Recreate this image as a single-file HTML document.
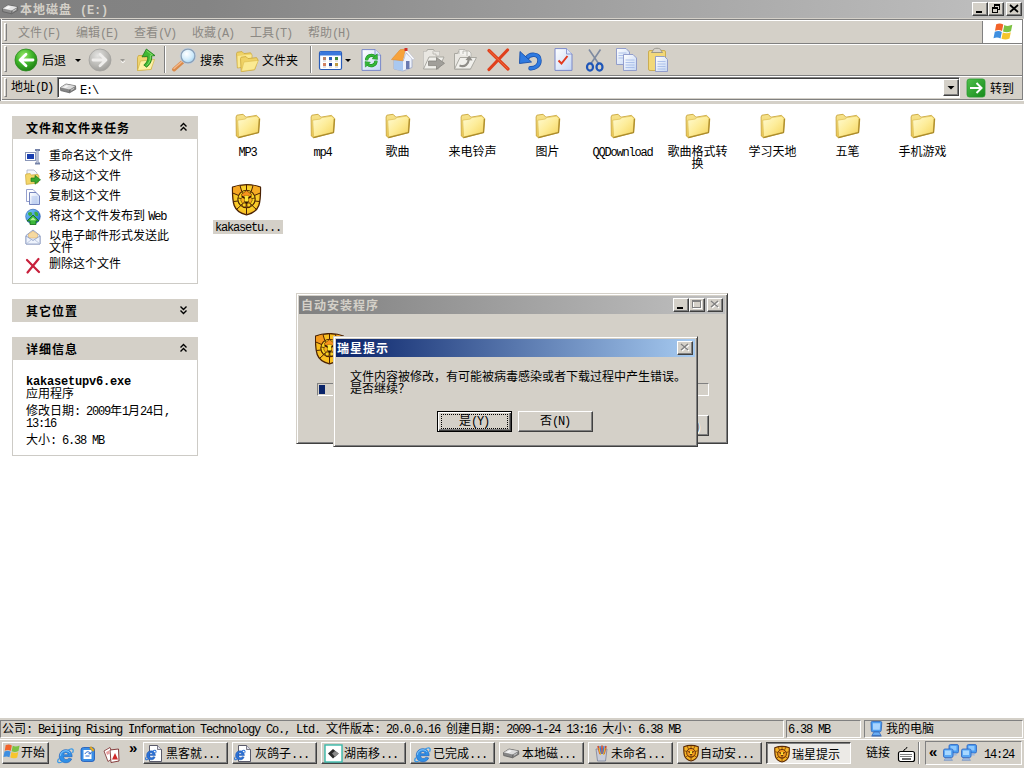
<!DOCTYPE html>
<html lang="zh-CN">
<head>
<meta charset="utf-8">
<title>本地磁盘 (E:)</title>
<style>
*{box-sizing:border-box;margin:0;padding:0}
html,body{width:1024px;height:768px;overflow:hidden;background:#fff}
body{font-family:"Liberation Sans","Noto Sans CJK SC",sans-serif;font-size:12px;color:#000;position:relative;line-height:12px}
.abs{position:absolute}
.t{position:absolute;white-space:nowrap;line-height:14px;height:14px;font-size:12px}
.l{font-family:"Liberation Mono",monospace;font-size:12px;letter-spacing:-1.2px}
.b{font-weight:bold;letter-spacing:1px}
.b .l{font-size:12px;letter-spacing:-0.2px}
.face{background:#d4d0c8}
.raised{background:#d4d0c8;border:1px solid;border-color:#fff #404040 #404040 #fff;box-shadow:inset -1px -1px 0 #808080}
.sunk{border:1px solid;border-color:#808080 #fff #fff #808080}
#title{left:0;top:0;width:1024px;height:18px;background:linear-gradient(90deg,#808080 0,#848484 20%,#a2a2a2 60%,#c0c0c0 100%)}
.cap{color:#d4d0c8}
.wb{position:absolute;width:16px;height:14px}
#menubar{left:0;top:18px;width:1024px;height:26px;background:#d4d0c8;border-top:1px solid #d4d0c8;border-bottom:1px solid #808080;box-shadow:inset 0 1px 0 #808080,inset 0 2px 0 #fff}
#menubar .t{color:#8c8984;top:7px}
.grip{position:absolute;width:3px;background:#d4d0c8;border:1px solid;border-color:#fff #808080 #808080 #fff}
#toolbar{left:0;top:44px;width:1024px;height:32px;background:#d4d0c8;border-top:1px solid #fff;border-bottom:1px solid #808080}
#addr{left:0;top:76px;width:1024px;height:24px;background:#d4d0c8;border-top:1px solid #fff;border-bottom:1px solid #808080}
.vsep{position:absolute;width:2px;border-left:1px solid #808080;border-right:1px solid #fff}
.hdr{position:absolute;left:12px;width:186px;height:23px;background:#d4d0c8}
.hdr .t{left:14px;top:6px}
.pbody{position:absolute;left:12px;width:186px;background:#fff;border:1px solid #cdcbc6;border-top:none}
.task{left:49px}
.fl{position:absolute;width:90px;text-align:center;line-height:12px;font-size:12px}
.tbn{position:absolute;top:742px;width:85px;height:22px}
.tbn .t{top:4px;left:22px}
.dlg{position:absolute;background:#d4d0c8;border:1px solid;border-color:#d4d0c8 #404040 #404040 #d4d0c8;box-shadow:inset 1px 1px 0 #fff,inset -1px -1px 0 #808080}
.btn{position:absolute;background:#d4d0c8;border:1px solid;border-color:#fff #404040 #404040 #fff;box-shadow:inset -1px -1px 0 #808080}
#ico{position:absolute;left:0;top:0;width:1024px;height:768px;pointer-events:none}
</style>
</head>
<body>

<!-- title bar -->
<div id="title" class="abs">
  <div class="t b cap" style="left:20px;top:3px">本地磁盘<span class="l" style="margin-left:8px">(E:)</span></div>
  <div class="wb raised" style="left:972px;top:2px"></div>
  <div class="wb raised" style="left:988px;top:2px"></div>
  <div class="wb raised" style="left:1006px;top:2px"></div>
</div>
<!-- menubar -->
<div id="menubar" class="abs">
  <div class="grip" style="left:4px;top:4px;height:18px"></div>
  <div class="t" style="left:18px">文件<span class="l">(F)</span></div>
  <div class="t" style="left:76px">编辑<span class="l">(E)</span></div>
  <div class="t" style="left:134px">查看<span class="l">(V)</span></div>
  <div class="t" style="left:192px">收藏<span class="l">(A)</span></div>
  <div class="t" style="left:250px">工具<span class="l">(T)</span></div>
  <div class="t" style="left:308px">帮助<span class="l">(H)</span></div>
  <div class="abs" style="left:982px;top:2px;width:41px;height:22px;background:#fff;border-left:1px solid #808080"></div>
</div>
<!-- toolbar -->
<div id="toolbar" class="abs">
  <div class="grip" style="left:4px;top:1px;height:26px"></div>
  <div class="t" style="left:42px;top:9px">后退</div>
  <div class="vsep" style="left:164px;top:1px;height:27px"></div>
  <div class="t" style="left:200px;top:9px">搜索</div>
  <div class="t" style="left:262px;top:9px">文件夹</div>
  <div class="vsep" style="left:310px;top:1px;height:27px"></div>
</div>
<!-- address -->
<div id="addr" class="abs">
  <div class="grip" style="left:4px;top:1px;height:19px"></div>
  <div class="t" style="left:11px;top:3px">地址<span class="l">(D)</span></div>
  <div class="abs" style="left:57px;top:0px;width:903px;height:21px;background:#fff;border:1px solid;border-color:#808080 #fff #fff #808080;box-shadow:inset 1px 1px 0 #404040"></div>
  <div class="abs raised" style="left:943px;top:2px;width:16px;height:17px"></div>
  <div class="t" style="left:80px;top:6px"><span class="l">E:\</span></div>
  <div class="t" style="left:990px;top:5px">转到</div>
</div>
<div class="abs" style="left:0;top:100px;width:1024px;height:4px;background:#d4d0c8;border-top:1px solid #fff"></div>
<div class="abs" style="left:0;top:19px;width:2px;height:82px;border-left:1px solid #808080;background:#fff"></div>
<div class="abs" style="left:1022px;top:19px;width:2px;height:81px;border-left:1px solid #808080;background:#fff"></div>

<!-- left panel -->
<div class="hdr" style="top:116px"><div class="t b">文件和文件夹任务</div></div>
<div class="pbody" style="top:139px;height:145px"></div>
<div class="t task" style="top:149px">重命名这个文件</div>
<div class="t task" style="top:169px">移动这个文件</div>
<div class="t task" style="top:189px">复制这个文件</div>
<div class="t task" style="top:209px">将这个文件发布到 <span class="l">Web</span></div>
<div class="t task" style="top:229px">以电子邮件形式发送此</div>
<div class="t task" style="top:241px">文件</div>
<div class="t task" style="top:257px">删除这个文件</div>

<div class="hdr" style="top:299px"><div class="t b">其它位置</div></div>
<div class="hdr" style="top:337px"><div class="t b">详细信息</div></div>
<div class="pbody" style="top:360px;height:96px"></div>
<div class="t b" style="left:26px;top:374px"><span class="l">kakasetupv6.exe</span></div>
<div class="t" style="left:26px;top:387px">应用程序</div>
<div class="t" style="left:26px;top:404px">修改日期<span class="l">: 2009</span>年<span class="l">1</span>月<span class="l">24</span>日<span class="l">,</span></div>
<div class="t" style="left:26px;top:416px"><span class="l">13:16</span></div>
<div class="t" style="left:26px;top:433px">大小<span class="l">: 6.38 MB</span></div>

<!-- files -->
<div class="fl" style="left:202.5px;top:146px"><span class="l">MP3</span></div>
<div class="fl" style="left:277.5px;top:146px"><span class="l">mp4</span></div>
<div class="fl" style="left:352.5px;top:146px">歌曲</div>
<div class="fl" style="left:427.5px;top:146px">来电铃声</div>
<div class="fl" style="left:502.5px;top:146px">图片</div>
<div class="fl" style="left:577.5px;top:146px"><span class="l">QQDownload</span></div>
<div class="fl" style="left:652.5px;top:146px">歌曲格式转<br>换</div>
<div class="fl" style="left:727.5px;top:146px">学习天地</div>
<div class="fl" style="left:802.5px;top:146px">五笔</div>
<div class="fl" style="left:877.5px;top:146px">手机游戏</div>
<div class="abs face" style="left:213px;top:220px;width:70px;height:14px"></div>
<div class="fl" style="left:203px;top:221px"><span class="l">kakasetu...</span></div>
<!-- status bar -->
<div class="abs face" style="left:0;top:718px;width:1024px;height:20px"></div>
<div class="abs sunk" style="left:0;top:720px;width:784px;height:18px"></div>
<div class="abs sunk" style="left:786px;top:720px;width:75px;height:18px"></div>
<div class="abs sunk" style="left:864px;top:720px;width:159px;height:18px"></div>
<div class="t" style="left:2px;top:722px">公司<span class="l">: Beijing Rising Information Technology Co., Ltd. </span>文件版本<span class="l">: 20.0.0.16 </span>创建日期<span class="l">: 2009-1-24 13:16 </span>大小<span class="l">: 6.38 MB</span></div>
<div class="t" style="left:788px;top:722px"><span class="l">6.38 MB</span></div>
<div class="t" style="left:886px;top:722px">我的电脑</div>

<!-- taskbar -->
<div class="abs face" style="left:0;top:738px;width:1024px;height:30px;box-shadow:inset 0 2px 0 #d4d0c8, inset 0 2px 0 #fff"></div><div class="abs" style="left:0;top:739px;width:1024px;height:1px;background:#fff"></div>
<div class="abs raised" style="left:2px;top:742px;width:47px;height:22px"></div>
<div class="t" style="left:21px;top:746px">开始</div>
<div class="t" style="left:129px;top:741px;font-weight:bold;font-size:15px">»</div>
<div class="tbn raised" style="left:143px"><div class="t">黑客就<span class="l">...</span></div></div>
<div class="tbn raised" style="left:232px"><div class="t">灰鸽子<span class="l">...</span></div></div>
<div class="tbn raised" style="left:321px"><div class="t">湖南移<span class="l">...</span></div></div>
<div class="tbn raised" style="left:410px"><div class="t">已完成<span class="l">...</span></div></div>
<div class="tbn raised" style="left:499px"><div class="t">本地磁<span class="l">...</span></div></div>
<div class="tbn raised" style="left:588px"><div class="t">未命名<span class="l">...</span></div></div>
<div class="tbn raised" style="left:677px"><div class="t">自动安<span class="l">...</span></div></div>
<div class="tbn" style="left:766px;background:#eceae6;border:1px solid;border-color:#404040 #fff #fff #404040;box-shadow:inset 1px 1px 0 #808080"><div class="t" style="left:25px;top:5px">瑞星提示</div></div>
<div class="t" style="left:866px;top:746px">链接</div>
<div class="vsep" style="left:918px;top:742px;height:22px"></div>
<div class="abs sunk" style="left:925px;top:741px;width:97px;height:24px"></div>
<div class="t" style="left:929px;top:745px;font-weight:bold;font-size:15px">«</div>
<div class="t" style="left:984px;top:747px"><span class="l">14:24</span></div>
<!-- outer dialog -->
<div class="dlg" style="left:296px;top:293px;width:432px;height:151px">
  <div class="abs" style="left:2px;top:2px;width:426px;height:18px;background:linear-gradient(90deg,#808080,#c0c0c0)"></div>
  <div class="t b cap" style="left:4px;top:5px">自动安装程序</div>
  <div class="wb raised" style="left:376px;top:4px"></div>
  <div class="wb raised" style="left:392px;top:4px"></div>
  <div class="wb raised" style="left:410px;top:4px"></div>
<svg class="abs" style="left:18px;top:39px" width="30" height="32" viewBox="0 0 30 32">
<path d="M0.5,3.2 Q14.5,-2 28.5,3.2 C28.6,10 28.4,17 26.8,21.5 C25,26.5 20,29.6 14.5,30.8 C9,29.6 4,26.5 2.2,21.5 C0.6,17 0.4,10 0.5,3.2 Z" fill="#f9bf20" stroke="#4a2204" stroke-width="1.300" stroke-linejoin="round"/>
<path d="M1.200,3.600 Q4.500,2.200 8,1.600 L9.800,7.400 L6.400,11.400 L1,9 Z" fill="#f39a1e"/>
<path d="M27.800,3.600 Q24.500,2.200 21,1.600 L19.200,7.400 L22.600,11.400 L28,9 Z" fill="#f5a21e"/>
<circle cx="14.500" cy="15" r="8.700" fill="#f9d522" stroke="#4a2204" stroke-width="1.100"/>
<g fill="none" stroke="#4a2204" stroke-width="1">
<path d="M14.500,0.700 V6.400 M8,1.600 L9.800,7.600 M21,1.600 L19.200,7.600 M0.800,9 L6.600,11.500 M28.200,9 L22.400,11.500 M1.600,17.500 L6,17 M27.400,17.500 L23,17 M5,25 L8.800,21.600 M24,25 L20.200,21.600 M14.500,30.500 V23.600"/>
<path d="M6,14 L9.400,14.600 M23,14 L19.600,14.600 M8.600,21.400 L10.800,19.200 M20.400,21.400 L18.200,19.200 M10,8 L11.600,10.200 M19,8 L17.400,10.200" stroke-width="0.800"/>
</g>
<path d="M14.500,6.600 L19.600,10.400 L18.800,13 L16.300,12 H12.700 L10.200,13 L9.400,10.400 Z" fill="#f7931c" stroke="#4a2204" stroke-width="0.600" stroke-linejoin="round"/>
<path d="M10.200,13 L12.700,14.600 L12.400,18.400 L10.400,19.400 L8.600,16 Z M18.800,13 L16.300,14.600 L16.600,18.400 L18.600,19.400 L20.400,16 Z" fill="#f8b01e" stroke="#4a2204" stroke-width="0.500" stroke-linejoin="round"/>
<path d="M12.700,11.800 h3.600 l-0.200,6 h-3.200 Z" fill="#ffe838"/>
<path d="M9.800,12.400 l3,1.800 M19.200,12.400 l-3,1.800" stroke="#2e1402" stroke-width="1.300" fill="none"/>
<path d="M12,17.600 h5 l-2.500,2.600 Z" fill="#2e1402"/>
<circle cx="12.200" cy="21" r="2" fill="#fbd024" stroke="#4a2204" stroke-width="0.700"/>
<circle cx="16.800" cy="21" r="2" fill="#fbd024" stroke="#4a2204" stroke-width="0.700"/>
<path d="M14.500,20.200 V23" stroke="#4a2204" stroke-width="0.700"/>
</svg>
<svg class="abs" style="left:376px;top:4px" width="52" height="14" viewBox="0 0 52 14">
<rect x="4" y="9" width="6" height="2" fill="#000"/>
<rect x="20.500" y="3.500" width="8" height="7" fill="none" stroke="#fff" stroke-width="1"/>
<rect x="19.500" y="2.500" width="8" height="7" fill="none" stroke="#808080" stroke-width="1"/><path d="M19.500,3.500 h8" stroke="#808080"/>
<path d="M39,4 l7,6 M46,4 l-7,6" stroke="#fff" stroke-width="1.400" fill="none"/>
<path d="M38,3 l7,6 M45,3 l-7,6" stroke="#808080" stroke-width="1.400" fill="none"/>
</svg>
  <div class="abs sunk" style="left:20px;top:89px;width:392px;height:13px"></div>
  <div class="abs" style="left:22px;top:91px;width:6px;height:9px;background:#0a246a"></div>
  <div class="btn" style="left:337px;top:121px;width:75px;height:21px"></div>
  <div class="t" style="left:361px;top:125px;color:#808080;text-shadow:1px 1px 0 #fff">取消<span class="l">(C)</span></div>
</div>
<!-- inner dialog -->
<div class="dlg" style="left:333px;top:336px;width:365px;height:111px">
  <div class="abs" style="left:2px;top:2px;width:359px;height:18px;background:linear-gradient(90deg,#0a246a,#a6caf0)"></div>
  <div class="t b" style="left:3px;top:5px;color:#fff">瑞星提示</div>
  <div class="wb raised" style="left:343px;top:4px"></div>
<svg class="abs" style="left:343px;top:4px" width="16" height="14" viewBox="0 0 16 14">
<path d="M5,4 l7,6 M12,4 l-7,6" stroke="#fff" stroke-width="1.400" fill="none"/>
<path d="M4,3 l7,6 M11,3 l-7,6" stroke="#808080" stroke-width="1.400" fill="none"/>
</svg>
  <div class="t" style="left:16px;top:33px">文件内容被修改，有可能被病毒感染或者下载过程中产生错误。</div>
  <div class="t" style="left:16px;top:45px">是否继续？</div>
  <div class="btn" style="left:103px;top:74px;width:75px;height:21px;border-color:#000;box-shadow:inset 1px 1px 0 #fff,inset -1px -1px 0 #404040,inset -2px -2px 0 #808080"></div>
  <div class="abs" style="left:107px;top:77px;width:67px;height:15px;border:1px dotted #000"></div>
  <div class="t" style="left:125px;top:77px">是<span class="l">(Y)</span></div>
  <div class="btn" style="left:184px;top:74px;width:75px;height:21px"></div>
  <div class="t" style="left:206px;top:77px">否<span class="l">(N)</span></div>
</div>

<svg id="ico" width="1024" height="768" viewBox="0 0 1024 768">
<defs>
<linearGradient id="gFold" x1="0" y1="0" x2="1" y2="1"><stop offset="0" stop-color="#fffbd2"/><stop offset="0.5" stop-color="#fdec98"/><stop offset="1" stop-color="#f4d35a"/></linearGradient>
<linearGradient id="gFoldB" x1="0" y1="0" x2="0" y2="1"><stop offset="0" stop-color="#f7e48e"/><stop offset="1" stop-color="#e8c450"/></linearGradient>
<radialGradient id="gBack" cx="0.4" cy="0.3" r="0.75"><stop offset="0" stop-color="#9be86a"/><stop offset="0.5" stop-color="#3fb52a"/><stop offset="1" stop-color="#1c7a12"/></radialGradient>
<radialGradient id="gFwd" cx="0.4" cy="0.3" r="0.75"><stop offset="0" stop-color="#e4e4e2"/><stop offset="0.6" stop-color="#b9b8b4"/><stop offset="1" stop-color="#9a9995"/></radialGradient>
<radialGradient id="gLens" cx="0.4" cy="0.35" r="0.7"><stop offset="0" stop-color="#ffffff"/><stop offset="0.6" stop-color="#d2ecfb"/><stop offset="1" stop-color="#9fd0f0"/></radialGradient>
<radialGradient id="gLion" cx="0.5" cy="0.45" r="0.6"><stop offset="0" stop-color="#ffe448"/><stop offset="0.6" stop-color="#fad02a"/><stop offset="1" stop-color="#f6b022"/></radialGradient>
<linearGradient id="gPage" x1="0" y1="0" x2="1" y2="1"><stop offset="0" stop-color="#ffffff"/><stop offset="1" stop-color="#c4d6f4"/></linearGradient>
<linearGradient id="gGo" x1="0" y1="0" x2="1" y2="1"><stop offset="0" stop-color="#4fc04a"/><stop offset="1" stop-color="#168a1c"/></linearGradient>
<linearGradient id="gGlobe" x1="0" y1="0" x2="1" y2="1"><stop offset="0" stop-color="#7fd0ff"/><stop offset="1" stop-color="#1a66c8"/></linearGradient>
</defs>
<g transform="translate(235.5,114) scale(1.0)">
<path d="M0.6,3 L1.4,1.2 L7.6,0.3 L10.4,3.2 L21,1.4 L24.3,4.6 L23.2,18.6 L3,23.7 L0.8,22 Z" fill="url(#gFoldB)" stroke="#c9a63c" stroke-width="0.9" stroke-linejoin="round"/>
<path d="M2.2,6.2 L10,5 L11,3.6 L21.4,2.1 L23.6,4.8 L22.6,18.2 L3.1,23 Z" fill="url(#gFold)" stroke="#d8b748" stroke-width="0.6" stroke-linejoin="round"/>
<path d="M23.9,5 L23,18.6 L3,23.6" fill="none" stroke="#a98a2c" stroke-width="1.1"/>
</g>
<g transform="translate(310.5,114) scale(1.0)">
<path d="M0.6,3 L1.4,1.2 L7.6,0.3 L10.4,3.2 L21,1.4 L24.3,4.6 L23.2,18.6 L3,23.7 L0.8,22 Z" fill="url(#gFoldB)" stroke="#c9a63c" stroke-width="0.9" stroke-linejoin="round"/>
<path d="M2.2,6.2 L10,5 L11,3.6 L21.4,2.1 L23.6,4.8 L22.6,18.2 L3.1,23 Z" fill="url(#gFold)" stroke="#d8b748" stroke-width="0.6" stroke-linejoin="round"/>
<path d="M23.9,5 L23,18.6 L3,23.6" fill="none" stroke="#a98a2c" stroke-width="1.1"/>
</g>
<g transform="translate(385.5,114) scale(1.0)">
<path d="M0.6,3 L1.4,1.2 L7.6,0.3 L10.4,3.2 L21,1.4 L24.3,4.6 L23.2,18.6 L3,23.7 L0.8,22 Z" fill="url(#gFoldB)" stroke="#c9a63c" stroke-width="0.9" stroke-linejoin="round"/>
<path d="M2.2,6.2 L10,5 L11,3.6 L21.4,2.1 L23.6,4.8 L22.6,18.2 L3.1,23 Z" fill="url(#gFold)" stroke="#d8b748" stroke-width="0.6" stroke-linejoin="round"/>
<path d="M23.9,5 L23,18.6 L3,23.6" fill="none" stroke="#a98a2c" stroke-width="1.1"/>
</g>
<g transform="translate(460.5,114) scale(1.0)">
<path d="M0.6,3 L1.4,1.2 L7.6,0.3 L10.4,3.2 L21,1.4 L24.3,4.6 L23.2,18.6 L3,23.7 L0.8,22 Z" fill="url(#gFoldB)" stroke="#c9a63c" stroke-width="0.9" stroke-linejoin="round"/>
<path d="M2.2,6.2 L10,5 L11,3.6 L21.4,2.1 L23.6,4.8 L22.6,18.2 L3.1,23 Z" fill="url(#gFold)" stroke="#d8b748" stroke-width="0.6" stroke-linejoin="round"/>
<path d="M23.9,5 L23,18.6 L3,23.6" fill="none" stroke="#a98a2c" stroke-width="1.1"/>
</g>
<g transform="translate(535.5,114) scale(1.0)">
<path d="M0.6,3 L1.4,1.2 L7.6,0.3 L10.4,3.2 L21,1.4 L24.3,4.6 L23.2,18.6 L3,23.7 L0.8,22 Z" fill="url(#gFoldB)" stroke="#c9a63c" stroke-width="0.9" stroke-linejoin="round"/>
<path d="M2.2,6.2 L10,5 L11,3.6 L21.4,2.1 L23.6,4.8 L22.6,18.2 L3.1,23 Z" fill="url(#gFold)" stroke="#d8b748" stroke-width="0.6" stroke-linejoin="round"/>
<path d="M23.9,5 L23,18.6 L3,23.6" fill="none" stroke="#a98a2c" stroke-width="1.1"/>
</g>
<g transform="translate(610.5,114) scale(1.0)">
<path d="M0.6,3 L1.4,1.2 L7.6,0.3 L10.4,3.2 L21,1.4 L24.3,4.6 L23.2,18.6 L3,23.7 L0.8,22 Z" fill="url(#gFoldB)" stroke="#c9a63c" stroke-width="0.9" stroke-linejoin="round"/>
<path d="M2.2,6.2 L10,5 L11,3.6 L21.4,2.1 L23.6,4.8 L22.6,18.2 L3.1,23 Z" fill="url(#gFold)" stroke="#d8b748" stroke-width="0.6" stroke-linejoin="round"/>
<path d="M23.9,5 L23,18.6 L3,23.6" fill="none" stroke="#a98a2c" stroke-width="1.1"/>
</g>
<g transform="translate(685.5,114) scale(1.0)">
<path d="M0.6,3 L1.4,1.2 L7.6,0.3 L10.4,3.2 L21,1.4 L24.3,4.6 L23.2,18.6 L3,23.7 L0.8,22 Z" fill="url(#gFoldB)" stroke="#c9a63c" stroke-width="0.9" stroke-linejoin="round"/>
<path d="M2.2,6.2 L10,5 L11,3.6 L21.4,2.1 L23.6,4.8 L22.6,18.2 L3.1,23 Z" fill="url(#gFold)" stroke="#d8b748" stroke-width="0.6" stroke-linejoin="round"/>
<path d="M23.9,5 L23,18.6 L3,23.6" fill="none" stroke="#a98a2c" stroke-width="1.1"/>
</g>
<g transform="translate(760.5,114) scale(1.0)">
<path d="M0.6,3 L1.4,1.2 L7.6,0.3 L10.4,3.2 L21,1.4 L24.3,4.6 L23.2,18.6 L3,23.7 L0.8,22 Z" fill="url(#gFoldB)" stroke="#c9a63c" stroke-width="0.9" stroke-linejoin="round"/>
<path d="M2.2,6.2 L10,5 L11,3.6 L21.4,2.1 L23.6,4.8 L22.6,18.2 L3.1,23 Z" fill="url(#gFold)" stroke="#d8b748" stroke-width="0.6" stroke-linejoin="round"/>
<path d="M23.9,5 L23,18.6 L3,23.6" fill="none" stroke="#a98a2c" stroke-width="1.1"/>
</g>
<g transform="translate(835.5,114) scale(1.0)">
<path d="M0.6,3 L1.4,1.2 L7.6,0.3 L10.4,3.2 L21,1.4 L24.3,4.6 L23.2,18.6 L3,23.7 L0.8,22 Z" fill="url(#gFoldB)" stroke="#c9a63c" stroke-width="0.9" stroke-linejoin="round"/>
<path d="M2.2,6.2 L10,5 L11,3.6 L21.4,2.1 L23.6,4.8 L22.6,18.2 L3.1,23 Z" fill="url(#gFold)" stroke="#d8b748" stroke-width="0.6" stroke-linejoin="round"/>
<path d="M23.9,5 L23,18.6 L3,23.6" fill="none" stroke="#a98a2c" stroke-width="1.1"/>
</g>
<g transform="translate(910.5,114) scale(1.0)">
<path d="M0.6,3 L1.4,1.2 L7.6,0.3 L10.4,3.2 L21,1.4 L24.3,4.6 L23.2,18.6 L3,23.7 L0.8,22 Z" fill="url(#gFoldB)" stroke="#c9a63c" stroke-width="0.9" stroke-linejoin="round"/>
<path d="M2.2,6.2 L10,5 L11,3.6 L21.4,2.1 L23.6,4.8 L22.6,18.2 L3.1,23 Z" fill="url(#gFold)" stroke="#d8b748" stroke-width="0.6" stroke-linejoin="round"/>
<path d="M23.9,5 L23,18.6 L3,23.6" fill="none" stroke="#a98a2c" stroke-width="1.1"/>
</g>
<g transform="translate(232,184) scale(1.0)">
<path d="M0.5,3.2 Q14.5,-2 28.5,3.2 C28.6,10 28.4,17 26.8,21.5 C25,26.5 20,29.6 14.5,30.8 C9,29.6 4,26.5 2.2,21.5 C0.6,17 0.4,10 0.5,3.2 Z" fill="url(#gLion)" stroke="#4a2204" stroke-width="1.300" stroke-linejoin="round"/>
<path d="M1.200,3.600 Q4.500,2.200 8,1.600 L9.800,7.400 L6.400,11.400 L1,9 Z" fill="#f5a623"/>
<path d="M27.800,3.600 Q24.500,2.200 21,1.600 L19.200,7.400 L22.600,11.400 L28,9 Z" fill="#f6ac24"/>
<circle cx="14.500" cy="15" r="8.700" fill="#f9d522" stroke="#4a2204" stroke-width="1.100"/>
<g fill="none" stroke="#4a2204" stroke-width="1">
<path d="M14.500,0.700 V6.400 M8,1.600 L9.800,7.600 M21,1.600 L19.200,7.600 M0.800,9 L6.600,11.500 M28.200,9 L22.400,11.500 M1.600,17.500 L6,17 M27.400,17.500 L23,17 M5,25 L8.800,21.600 M24,25 L20.200,21.600 M14.500,30.500 V23.600"/>
<path d="M6,14 L9.400,14.600 M23,14 L19.600,14.600 M8.600,21.400 L10.800,19.200 M20.400,21.400 L18.200,19.200 M10,8 L11.600,10.200 M19,8 L17.400,10.200" stroke-width="0.800"/>
</g>
<path d="M14.500,6.600 L19.600,10.400 L18.800,13 L16.300,12 H12.700 L10.200,13 L9.400,10.400 Z" fill="#f7931c" stroke="#4a2204" stroke-width="0.600" stroke-linejoin="round"/>
<path d="M10.200,13 L12.700,14.600 L12.400,18.400 L10.400,19.400 L8.600,16 Z M18.800,13 L16.300,14.600 L16.600,18.400 L18.600,19.400 L20.400,16 Z" fill="#f8b01e" stroke="#4a2204" stroke-width="0.500" stroke-linejoin="round"/>
<path d="M12.700,11.800 h3.600 l-0.200,6 h-3.200 Z" fill="#ffe838"/>
<path d="M9.800,12.400 l3,1.800 M19.200,12.400 l-3,1.800" stroke="#2e1402" stroke-width="1.300" fill="none"/>
<path d="M12,17.600 h5 l-2.500,2.600 Z" fill="#2e1402"/>
<circle cx="12.200" cy="21" r="2" fill="#fbd024" stroke="#4a2204" stroke-width="0.700"/>
<circle cx="16.800" cy="21" r="2" fill="#fbd024" stroke="#4a2204" stroke-width="0.700"/>
<path d="M14.500,20.200 V23" stroke="#4a2204" stroke-width="0.700"/>
</g>
<!-- title icon: drive -->
<g id="drv-title" transform="translate(2,4)">
<path d="M0.500,4.600 L6,1 L15.500,2.800 L15.800,6.200 L9.600,9.800 L0.700,7.600 Z" fill="#8c8c8c" stroke="#5a5a5a" stroke-width="0.700"/>
<path d="M0.700,4.600 L6,1.200 L15.300,2.900 L9.600,6.400 Z" fill="#e6e6e6"/>
<path d="M3,4.400 L6.400,2.300 L9,2.800 L5.600,5 Z" fill="#fafafa"/>
<path d="M9.600,6.600 V9.600" stroke="#5a5a5a" stroke-width="0.600"/>
<path d="M11,7.200 l3,-1.800" stroke="#d8d8d8" stroke-width="0.900"/>
</g>
<!-- window buttons glyphs (main) -->
<g fill="#000">
<rect x="976" y="11" width="6" height="2"/>
<path d="M994,4.500 h6 v5 h-2 v-3 h-4 Z M995,6 v1 h4 v-1 Z" fill="none"/>
<rect x="994" y="4" width="6" height="2"/><rect x="994" y="4" width="1" height="4"/><rect x="999" y="4" width="1" height="6"/><rect x="998" y="9" width="2" height="1"/>
<rect x="992" y="7" width="6" height="2"/><rect x="992" y="7" width="1" height="6"/><rect x="997" y="7" width="1" height="6"/><rect x="992" y="12" width="6" height="1"/>
<path d="M1010,5 l8,7 M1018,5 l-8,7" stroke="#000" stroke-width="1.7" fill="none"/>
</g>
<!-- windows flag -->
<g transform="translate(993,23)">
<path d="M3.200,1.200 C6,0 8,0.300 10.300,1.600 L9,8 C7,6.800 4.800,6.600 2,7.800 Z" fill="#f2632a"/>
<path d="M11.300,2 C13.600,3.200 16,3.200 19.300,1.800 L18,8.200 C15,9.600 12.600,9.400 10,8.400 Z" fill="#7cc242"/>
<path d="M1.800,8.800 C4.600,7.600 6.800,7.800 8.800,9 L7.500,15.400 C5.400,14.200 3.200,14 0.500,15.200 Z" fill="#3f8fe0"/>
<path d="M9.800,9.400 C12.400,10.400 14.800,10.600 17.800,9.200 L16.500,15.600 C13.600,17 11,16.800 8.500,15.800 Z" fill="#f7c52c"/>
</g>
<!-- back -->
<circle cx="26" cy="60" r="11" fill="url(#gBack)" stroke="#2a8a1e" stroke-width="0.8"/>
<path d="M33,60 H20.500 M26,54.300 L20,60 L26,65.700" fill="none" stroke="#fff" stroke-width="2.800" stroke-linecap="round" stroke-linejoin="round"/>
<path d="M75,59 h6 l-3,3 Z" fill="#000"/>
<!-- forward -->
<circle cx="100" cy="60" r="11" fill="url(#gFwd)" stroke="#a3a29e" stroke-width="0.8"/>
<path d="M93,60 H105.500 M100,54.300 L106,60 L100,65.700" fill="none" stroke="#efeeec" stroke-width="2.800" stroke-linecap="round" stroke-linejoin="round"/>
<path d="M120,59 h5 l-2.500,2.500 Z" fill="#9a9894"/><path d="M121,61.300 l2,1.600 l2,-2" stroke="#fff" stroke-width="0.8" fill="none"/>
<!-- up folder -->
<g stroke-linejoin="round">
<path d="M137.500,57.500 L138.500,55.500 L143,55.500 L144,57 L151.500,57 L151.500,69 L137.500,70.500 Z" fill="#f0d570" stroke="#c9a63c" stroke-width="0.800"/>
<path d="M137.500,70.500 L140.500,61 L154.500,59.500 L151,69.500 Z" fill="#fdf1a6" stroke="#d2b348" stroke-width="0.700"/>
<path d="M146.400,49 L155,55.600 L151.600,55.900 C152.200,60 150.600,64 146.600,67.200 L143.800,65 C147,62.500 148.200,59.500 147.400,56.300 L142,56.900 Z" fill="#3fb832" stroke="#1a7a18" stroke-width="0.800"/>
<path d="M146.400,50.500 L152.500,55 L150.300,55.200 C150.900,59 149.800,62.500 146.600,65.500" fill="none" stroke="#8be070" stroke-width="0.900"/>
</g>
<!-- search -->
<g>
<path d="M182.500,62 L174,69.500" stroke="#d98a4a" stroke-width="4" stroke-linecap="round"/>
<path d="M182,61.500 L174,68.500" stroke="#f4b88a" stroke-width="1.400" stroke-linecap="round"/>
<circle cx="188" cy="56" r="7" fill="url(#gLens)" stroke="#8aa0b8" stroke-width="1.500"/>
<circle cx="188" cy="56" r="8" fill="none" stroke="#c4d0dc" stroke-width="0.700"/>
</g>
<!-- folders -->
<g transform="translate(236,51)">
<path d="M0.500,2.600 L1.200,1.200 L6,0.600 L8,2.600 L14.600,1.800 L16,4 L15.400,15 L1.400,17 Z" fill="#efd265" stroke="#c9a63c" stroke-width="0.8"/>
<path d="M1.600,5 L15.600,3.600 L15.200,14.800 L1.800,16.600 Z" fill="#fbea93"/>
<path d="M4.500,7.600 L5.200,6.200 L10,5.600 L12,7.600 L20.600,6.600 L22,9 L18.600,18.800 L5.200,20.600 Z" fill="#efd265" stroke="#c9a63c" stroke-width="0.8"/>
<path d="M8,11 L22.400,9.400 L18.400,18.600 L5.400,20.300 Z" fill="#fbea93" stroke="#d8b748" stroke-width="0.5"/>
</g>
<!-- views -->
<g>
<rect x="319.500" y="51.500" width="22" height="18" rx="1.500" fill="#fff" stroke="#2a5db8" stroke-width="1.200"/>
<path d="M320,53 a1.500,1.500 0 0 1 1.500,-1.500 h18 a1.500,1.500 0 0 1 1.500,1.500 v2.500 h-21 Z" fill="#3a78dc"/>
<rect x="323" y="57" width="3" height="3" fill="#b8826a"/><rect x="329" y="57" width="3" height="3" fill="#2a62c0"/><rect x="335" y="57" width="3" height="3" fill="#3f8a3a"/>
<rect x="323" y="63" width="3" height="3" fill="#d08060"/><rect x="329" y="63" width="3" height="3" fill="#1a3a90"/><rect x="335" y="63" width="3" height="3" fill="#c09a40"/>
<path d="M323,61 h3 M329,61 h3 M335,61 h3 M323,67 h3 M329,67 h3 M335,67 h3" stroke="#9a9aa8" stroke-width="0.600"/>
<path d="M345,59 h6 l-3,3 Z" fill="#000"/>
</g>
<!-- refresh -->
<g transform="translate(361,49)">
<path d="M1,0.600 H14 L19.600,6 V21.400 H1 Z" fill="url(#gPage)" stroke="#7a88c8" stroke-width="1"/>
<path d="M14,0.600 V6 H19.600" fill="#dfe8fb" stroke="#7a88c8" stroke-width="0.800"/>
<g id="rf">
<path d="M5.600,11.300 A4.900,4.900 0 0 1 13.800,7.600" stroke="#1a8a22" stroke-width="3.200" fill="none"/>
<path d="M5.600,11.300 A4.900,4.900 0 0 1 13.800,7.600" stroke="#35b838" stroke-width="2.200" fill="none"/>
<path d="M11.200,9.800 L16.600,10.400 L16.200,4.800 Z" fill="#35b838" stroke="#1a8a22" stroke-width="0.500"/>
<path d="M15,11.700 A4.900,4.900 0 0 1 6.800,15.400" stroke="#1a8a22" stroke-width="3.200" fill="none"/>
<path d="M15,11.700 A4.900,4.900 0 0 1 6.800,15.400" stroke="#35b838" stroke-width="2.200" fill="none"/>
<path d="M9.400,13.200 L4,12.600 L4.400,18.200 Z" fill="#35b838" stroke="#1a8a22" stroke-width="0.500"/>
</g>
</g>
<!-- home -->
<g transform="translate(391,48)">
<path d="M3,11 L3,21 L12,23 L21,19.500 L21,10 L13,3 Z" fill="#eef2fb" stroke="#9aa6c8" stroke-width="0.800"/>
<path d="M3,11 L3,21 L12,23 L12,12 Z" fill="#a9c8f0"/>
<path d="M0.500,11.500 L9,1.800 L15,1 L12.200,12.800 Z" fill="#f7a23a" stroke="#e08a2a" stroke-width="0.600"/>
<path d="M12.200,12.800 L15,1 L23.400,10.800 L22,12 L15.300,4.600 Z" fill="#fff" stroke="#b8bcd0" stroke-width="0.600"/>
<rect x="15" y="13" width="3.500" height="8" fill="#6a7ab0"/>
<rect x="13.500" y="0" width="3" height="3" fill="#d0302a"/>
</g>
<!-- disabled move -->
<g transform="translate(423,48)" stroke-linejoin="round">
<path d="M0.500,21 V3.500 H3.500 L4.500,1.500 H10.500 L11.500,3.500 H16.500 V8" fill="#e9e7e2" stroke="#a3a19b" stroke-width="0.900"/>
<path d="M0.500,21 V3.500 H16.500 V21 Z" fill="#e9e7e2" stroke="none"/>
<path d="M10,3 v3 h3 v2 h3" fill="none" stroke="#b4b2ac" stroke-width="0.800"/>
<path d="M0.500,21 L6,9 H21 L15.500,21 Z" fill="#f1f0ec" stroke="#a3a19b" stroke-width="0.900"/>
<path d="M5.500,13 H13.500 V9.500 L21.500,15.300 L13.500,21.200 V17.600 H5.500 Z" fill="#a19f9a" stroke="#85837e" stroke-width="0.800"/>
</g>
<!-- disabled copy -->
<g transform="translate(454,48)" stroke-linejoin="round">
<path d="M0.500,21 V5.500 H3.500 L4.500,3.500 H10.500 L11.500,5.500 H16.500 V21 Z" fill="#e9e7e2" stroke="#a3a19b" stroke-width="0.900"/>
<path d="M5,6 V1.500 H11 L13,3.500 V8 M9,6 V3 H15 L17,5 V9" fill="#f4f3f0" stroke="#b0aea8" stroke-width="0.800"/>
<path d="M0.500,21 L6,9.500 H22.500 L16.500,21 Z" fill="#f1f0ec" stroke="#a3a19b" stroke-width="0.900"/>
<path d="M5.500,17.500 C11,19.500 14.500,16 15,10.500" fill="none" stroke="#8f8d88" stroke-width="2.200"/>
<path d="M11.500,12 L15.200,7.500 L18.600,12.500 Z" fill="#8f8d88"/>
</g>
<!-- delete X -->
<path d="M489,50.500 L508,69 M507.500,50 L489,69.500" stroke="#e0401c" stroke-width="3.200" stroke-linecap="round" fill="none"/>
<path d="M489.500,51 L507.500,68.500" stroke="#f26a3a" stroke-width="1" stroke-linecap="round" fill="none"/>
<!-- undo -->
<path d="M526.500,58.500 C530,53 539.500,53.500 539.500,60.500 C539.500,65.500 535,68.500 530.500,68.300" fill="none" stroke="#1a4fa8" stroke-width="4.400" stroke-linecap="round"/>
<path d="M526.500,58.500 C530,53 539.500,53.500 539.500,60.500 C539.500,65.500 535,68.500 530.500,68.300" fill="none" stroke="#2f7ae0" stroke-width="3" stroke-linecap="round"/>
<path d="M520,51.500 L519.500,63.500 L531.500,62 Z" fill="#2f7ae0" stroke="#1a4fa8" stroke-width="0.900" stroke-linejoin="round"/>
<!-- properties -->
<g transform="translate(554,48)">
<path d="M1,0.600 H12.500 L18,6 V22.400 H1 Z" fill="url(#gPage)" stroke="#7a88c8" stroke-width="1"/>
<path d="M12.500,0.600 V6 H18" fill="#dfe8fb" stroke="#7a88c8" stroke-width="0.800"/>
<path d="M4.500,12.500 L7.500,15.500 L13.500,8" fill="none" stroke="#e23a1e" stroke-width="2"/>
</g>
<!-- cut -->
<g fill="none">
<path d="M589,49.500 L598.500,63.500 M600.500,49.500 L591,63.500" stroke="#7e8aa0" stroke-width="1.600"/>
<ellipse cx="590" cy="67" rx="3" ry="3.600" stroke="#1f56b8" stroke-width="2.200"/>
<ellipse cx="599.500" cy="67" rx="3" ry="3.600" stroke="#1f56b8" stroke-width="2.200"/>
</g>
<!-- copy -->
<g>
<path d="M616.500,48.500 H626 L629.500,52 V64.500 H616.500 Z" fill="url(#gPage)" stroke="#8a96c8" stroke-width="0.900"/>
<path d="M618.500,53 h8 M618.500,55.500 h8 M618.500,58 h8" stroke="#9fb6e6" stroke-width="0.800"/>
<path d="M623.500,54.500 H633 L636.500,58 V70.500 H623.500 Z" fill="url(#gPage)" stroke="#8a96c8" stroke-width="0.900"/>
<path d="M625.500,60 h9 M625.500,62.500 h9 M625.500,65 h9 M625.500,67.500 h9" stroke="#9fb6e6" stroke-width="0.800"/>
</g>
<!-- paste -->
<g>
<rect x="648.500" y="50.500" width="17" height="20" rx="1.500" fill="#f2d878" stroke="#c8a84a" stroke-width="0.900"/>
<path d="M653,50.500 C653,47.500 661,47.500 661,50.500 L662.500,52.500 H651.500 Z" fill="#d8d4cc" stroke="#8a8880" stroke-width="0.800"/>
<path d="M655.500,56.500 H664.500 L667.500,59.500 V71.500 H655.500 Z" fill="url(#gPage)" stroke="#8a96c8" stroke-width="0.900"/>
<path d="M657.500,61.500 h8 M657.500,64 h8 M657.500,66.500 h8 M657.500,69 h8" stroke="#9fb6e6" stroke-width="0.800"/>
</g>
<!-- address drive icon -->
<g transform="translate(60,83)">
<path d="M0.500,4.600 L6,1 L15.500,2.800 L15.800,6.200 L9.600,9.800 L0.700,7.600 Z" fill="#868686" stroke="#555" stroke-width="0.700"/>
<path d="M0.700,4.600 L6,1.200 L15.300,2.900 L9.600,6.400 Z" fill="#dcdcdc"/>
<path d="M3,4.400 L6.400,2.300 L9,2.800 L5.600,5 Z" fill="#f6f6f6"/>
<path d="M9.600,6.600 V9.600" stroke="#555" stroke-width="0.600"/>
<path d="M11,7.200 l3,-1.800" stroke="#d0d0d0" stroke-width="0.900"/>
</g>
<!-- address dropdown arrow -->
<path d="M947.500,86 h7 l-3.500,3.500 Z" fill="#000"/>
<!-- go -->
<rect x="967" y="79" width="18" height="18" rx="2.500" fill="url(#gGo)" stroke="#2a9a30" stroke-width="0.800"/>
<path d="M970,88 H981 M976.500,83 L981.500,88 L976.500,93" fill="none" stroke="#fff" stroke-width="2"/>

<!-- panel chevrons -->
<g fill="none" stroke="#000" stroke-width="1.400">
<path d="M180.500,126.500 l3,-3 l3,3 M180.500,130.500 l3,-3 l3,3"/>
<path d="M180.500,306.500 l3,3 l3,-3 M180.500,310.500 l3,3 l3,-3"/>
<path d="M180.500,347.500 l3,-3 l3,3 M180.500,351.500 l3,-3 l3,3"/>
</g>
<!-- task: rename -->
<g transform="translate(25,149)">
<rect x="0.500" y="3.500" width="10" height="8" fill="#fff" stroke="#8a96b8" stroke-width="1"/>
<rect x="2" y="5" width="7" height="5" fill="#1a3fb0"/>
<path d="M12.500,1 V14.500 M10,1 h5 M10,14.500 h5" stroke="#7482a8" stroke-width="2" fill="none"/>
<path d="M12.500,1.500 V14" stroke="#dfe4f2" stroke-width="0.600"/>
</g>
<!-- task: move -->
<g transform="translate(25,169)">
<path d="M2,1 H9 L12,4 V11 H2 Z" fill="#f4f6fb" stroke="#a8b0c8" stroke-width="0.800"/>
<path d="M0.500,6 L1,5 L5,4.600 L6.500,6 L13,5.400 L14,7 L13,14 L1.200,15.400 Z" fill="#f3d66a" stroke="#c9a63c" stroke-width="0.700"/>
<path d="M6,9 h4 v-2.600 l5.500,4.400 l-5.500,4.400 v-2.600 h-4 Z" fill="#39a830" stroke="#1d7a18" stroke-width="0.700"/>
</g>
<!-- task: copy -->
<g transform="translate(25,189)">
<path d="M1.500,0.500 H8 L11,3.500 V12.500 H1.500 Z" fill="#fff" stroke="#8a96c8" stroke-width="0.900"/>
<path d="M4.500,3.500 H11 L14.500,7 V15.500 H4.500 Z" fill="url(#gPage)" stroke="#6a7ab8" stroke-width="0.900"/>
<path d="M6.500,8 h6 M6.500,10 h6 M6.500,12 h6 M6.500,14 h6" stroke="#9fb6e6" stroke-width="0.700"/>
</g>
<!-- task: publish web -->
<g transform="translate(25,209)">
<circle cx="8" cy="7.500" r="7.300" fill="url(#gGlobe)" stroke="#1a4fa8" stroke-width="0.600"/>
<path d="M3,4 C5,2 8,3 7,5.500 C6,8 3,7 3,4 Z M9.500,3 C12,2 14,4.500 13,7 C11,8 9,6 9.500,3 Z" fill="#3cae3c"/>
<path d="M8,6 L14,12 H11 V15.500 H5 V12 H2 Z" fill="#3cb83a" stroke="#0f6a14" stroke-width="0.800" stroke-linejoin="round"/>
<path d="M8,8.200 L11,11.200 H5 Z" fill="#b8f0a0"/>
</g>
<!-- task: email -->
<g transform="translate(25,229)">
<path d="M1,6.500 L8,1 L15,6.500 V15 H1 Z" fill="#dfe8f8" stroke="#8a9ac0" stroke-width="0.900" stroke-linejoin="round"/>
<path d="M3.500,5 L8,2.200 L12.500,5 L12.500,9 L3.500,9 Z" fill="#f6d9a0" stroke="#d8a860" stroke-width="0.500"/>
<path d="M1,7 L8,11.500 L15,7 V15 H1 Z" fill="#eef3fc" stroke="#8a9ac0" stroke-width="0.800" stroke-linejoin="round"/>
<path d="M1,15 L6.500,10.600 M15,15 L9.500,10.600" stroke="#a8b6d6" stroke-width="0.700"/>
</g>
<!-- task: delete -->
<path d="M27,260 L39,272 M38.500,259 L27.500,272.500" stroke="#c8203c" stroke-width="2.200" stroke-linecap="round" fill="none"/>
<!-- status: my computer -->
<g transform="translate(868,721)">
<path d="M3,1.500 C3,0.800 3.600,0.500 4.200,0.500 H12.500 C13.400,0.500 13.800,1 13.800,1.800 L13.200,9.600 C13.100,10.400 12.600,10.800 11.800,10.800 H4.600 C3.800,10.800 3.300,10.400 3.300,9.600 Z" fill="#4a9cf0" stroke="#2a62b8" stroke-width="0.800"/>
<path d="M4.800,2.200 H12.200 L11.800,8.800 H5 Z" fill="#a8d4ff"/>
<path d="M6,11 h5 l2,3.400 h-9 Z" fill="#6aaef4" stroke="#2a62b8" stroke-width="0.700"/>
<path d="M3.500,15 h10" stroke="#2a62b8" stroke-width="1"/>
</g>
<!-- start flag -->
<g transform="translate(3,744) scale(0.86)">
<path d="M3.200,1.200 C6,0 8,0.300 10.300,1.600 L9,8 C7,6.800 4.800,6.600 2,7.800 Z" fill="#f2632a"/>
<path d="M11.300,2 C13.600,3.200 16,3.200 19.300,1.800 L18,8.200 C15,9.600 12.600,9.400 10,8.400 Z" fill="#7cc242"/>
<path d="M1.800,8.800 C4.600,7.600 6.800,7.800 8.800,9 L7.500,15.400 C5.400,14.200 3.200,14 0.500,15.200 Z" fill="#3f8fe0"/>
<path d="M9.800,9.400 C12.400,10.400 14.800,10.600 17.800,9.200 L16.500,15.600 C13.600,17 11,16.800 8.500,15.800 Z" fill="#f7c52c"/>
</g>
<!-- quick launch -->
<g transform="translate(57,747) scale(1.05)">
<path d="M2.200,9 C2.200,5 5,2.600 8.400,2.600 C12,2.600 14.400,5 14.400,9.200 H6.200 C6.400,11 7.400,12 8.800,12 C10,12 10.800,11.500 11.400,10.600 L14,11.400 C13,13.800 11,15 8.600,15 C4.800,15 2.200,12.600 2.200,9 Z M6.300,7.400 H10.600 C10.400,6 9.600,5.200 8.400,5.200 C7.200,5.200 6.500,6 6.300,7.400 Z" fill="#2f8fe6" stroke="#1a5fc0" stroke-width="0.600"/>
<path d="M3.200,8.400 C3.400,5.400 5.600,3.600 8.400,3.600 C10,3.600 11.600,4.400 12.400,5.600" fill="none" stroke="#8fd0ff" stroke-width="0.900"/>
<path d="M1.600,11 C-0.600,14.600 1.400,16 5,14 M10.500,3.200 C14,0.600 16.600,1.800 14.800,5.600" fill="none" stroke="#3a9ae8" stroke-width="1.200"/>
</g>
<g transform="translate(80,746)">
<rect x="1" y="1.500" width="13.500" height="14" rx="2.500" fill="#3a8ee6" stroke="#1a56b8" stroke-width="0.800"/>
<rect x="3.500" y="4" width="8" height="9" fill="#fff"/>
<path d="M5,8 C6,5 10,5 10.500,8 M10.500,8 l-2,-0.400 M10.500,8 l0.800,-2 M5.500,10 h4" stroke="#2a6ad0" stroke-width="1" fill="none"/>
<path d="M11,0.500 l3.500,3.500 l-1.500,1.500 l-3.500,-3.500 Z" fill="#f0b020" stroke="#a87810" stroke-width="0.500"/>
</g>
<g transform="translate(103,746)">
<path d="M1,5 L7,1.500 L11,11 L5,15.500 Z" fill="#fff" stroke="#7a2a2a" stroke-width="0.800"/>
<path d="M7,4 L15.500,3 L16,15 L8,16.500 Z" fill="#fff" stroke="#7a2a2a" stroke-width="0.900"/>
<path d="M12,7 L15,13.500 H9 Z" fill="#d02a2a"/>
<path d="M3,6 l3,-1.500 l1,3 l-3,1.500 Z" fill="#e8a0a0"/>
</g>
<!-- task button icons -->
<g transform="translate(145,745)">
<path d="M4.500,0.500 H12.500 L16.500,4.500 V16.500 H4.500 Z" fill="#fff" stroke="#4a4a5a" stroke-width="0.900"/>
<path d="M12.500,0.500 V4.500 H16.500" fill="#e0e0ea" stroke="#4a4a5a" stroke-width="0.700"/>
<g transform="translate(0,4) scale(0.72)">
<path d="M2.200,9 C2.200,5 5,2.600 8.400,2.600 C12,2.600 14.400,5 14.400,9.200 H6.200 C6.400,11 7.400,12 8.800,12 C10,12 10.800,11.500 11.400,10.600 L14,11.400 C13,13.800 11,15 8.600,15 C4.800,15 2.200,12.600 2.200,9 Z M6.300,7.400 H10.600 C10.400,6 9.600,5.200 8.400,5.200 C7.200,5.200 6.500,6 6.300,7.400 Z" fill="#2a72d8" stroke="#1a4fa8" stroke-width="0.700"/>
<path d="M1.600,11 C-0.600,14.600 1.400,16 5,14 M10.500,3.200 C14,0.600 16.600,1.800 14.800,5.600" fill="none" stroke="#2a72d8" stroke-width="1.400"/>
</g>
</g>
<g transform="translate(234,745)">
<path d="M4.500,0.500 H12.500 L16.500,4.500 V16.500 H4.500 Z" fill="#fff" stroke="#4a4a5a" stroke-width="0.900"/>
<path d="M12.500,0.500 V4.500 H16.500" fill="#e0e0ea" stroke="#4a4a5a" stroke-width="0.700"/>
<g transform="translate(0,4) scale(0.72)">
<path d="M2.200,9 C2.200,5 5,2.600 8.400,2.600 C12,2.600 14.400,5 14.400,9.200 H6.200 C6.400,11 7.400,12 8.800,12 C10,12 10.800,11.500 11.400,10.600 L14,11.400 C13,13.800 11,15 8.600,15 C4.800,15 2.200,12.600 2.200,9 Z M6.300,7.400 H10.600 C10.400,6 9.600,5.200 8.400,5.200 C7.200,5.200 6.500,6 6.300,7.400 Z" fill="#2a72d8" stroke="#1a4fa8" stroke-width="0.700"/>
<path d="M1.600,11 C-0.600,14.600 1.400,16 5,14 M10.500,3.200 C14,0.600 16.600,1.800 14.800,5.600" fill="none" stroke="#2a72d8" stroke-width="1.400"/>
</g>
</g>
<g transform="translate(325,745)">
<rect x="0" y="0" width="17" height="17" fill="#fff" stroke="#3ab8a8" stroke-width="1.400"/>
<path d="M3,8.500 L8,4 L13.500,8.500 L8,13.500 Z" fill="#2a2a2a"/>
<path d="M7,8.500 L10,6 L14,8.500 L10,12 Z" fill="#8a8a8a"/>
</g>
<g transform="translate(414,746) scale(1.05)">
<path d="M2.200,9 C2.200,5 5,2.600 8.400,2.600 C12,2.600 14.400,5 14.400,9.200 H6.200 C6.400,11 7.400,12 8.800,12 C10,12 10.800,11.500 11.400,10.600 L14,11.400 C13,13.800 11,15 8.600,15 C4.800,15 2.200,12.600 2.200,9 Z M6.300,7.400 H10.600 C10.400,6 9.600,5.200 8.400,5.200 C7.200,5.200 6.500,6 6.300,7.400 Z" fill="#2f8fe6" stroke="#1a5fc0" stroke-width="0.600"/>
<path d="M3.200,8.400 C3.400,5.400 5.600,3.600 8.400,3.600 C10,3.600 11.600,4.400 12.400,5.600" fill="none" stroke="#8fd0ff" stroke-width="0.900"/>
<path d="M1.600,11 C-0.600,14.600 1.400,16 5,14 M10.500,3.200 C14,0.600 16.600,1.800 14.800,5.600" fill="none" stroke="#3a9ae8" stroke-width="1.200"/>
</g>
<g transform="translate(503,748)">
<path d="M0.500,4.600 L6,1 L15.500,2.800 L15.800,6.200 L9.600,9.800 L0.700,7.600 Z" fill="#868686" stroke="#555" stroke-width="0.700"/>
<path d="M0.700,4.600 L6,1.200 L15.300,2.900 L9.600,6.400 Z" fill="#dcdcdc"/>
<path d="M3,4.400 L6.400,2.300 L9,2.800 L5.600,5 Z" fill="#f6f6f6"/>
<path d="M9.600,6.600 V9.600" stroke="#555" stroke-width="0.600"/>
<path d="M11,7.200 l3,-1.800" stroke="#d0d0d0" stroke-width="0.900"/>
</g>
<g transform="translate(594,745)">
<path d="M2,4 H13 L11.500,16 H3.500 Z" fill="#c8ccd8" stroke="#7a8298" stroke-width="0.800"/>
<path d="M4,1 L6,9 M8,0.500 L8,9 M12,1 L10,9" stroke="#d04a2a" stroke-width="1.600" fill="none"/>
<path d="M6,1 L7,9 M10,1 L9,9" stroke="#3a7ad8" stroke-width="1.300" fill="none"/>
<path d="M5,3 L6.500,10 M11,3 L9.500,10" stroke="#e8c030" stroke-width="1.100" fill="none"/>
</g>
<g transform="translate(683.5,745) scale(0.52)">
<path d="M0.5,3.2 Q14.5,-2 28.5,3.2 C28.6,10 28.4,17 26.8,21.5 C25,26.5 20,29.6 14.5,30.8 C9,29.6 4,26.5 2.2,21.5 C0.6,17 0.4,10 0.5,3.2 Z" fill="#f6b324" stroke="#5a2a06" stroke-width="2.200" stroke-linejoin="round"/>
<path d="M14.5,1 V6 M7,2 L9.500,7.500 M22,2 L19.500,7.500 M1.500,11 L6.500,12.500 M27.500,11 L22.500,12.500 M4,23 L8.500,20.500 M25,23 L20.500,20.500 M14.500,30 V24" stroke="#7a3a08" stroke-width="1.600" fill="none"/>
<circle cx="14.500" cy="15" r="8.400" fill="#f39a1e" stroke="#5a2a06" stroke-width="1.800"/>
<path d="M12.500,11.500 h4 l-0.300,6 h-3.400 Z" fill="#ffe23a"/>
<path d="M9.500,12.400 l3.200,1.800 M19.500,12.400 l-3.200,1.800" stroke="#2e1402" stroke-width="2" fill="none"/>
<path d="M11.500,17.600 h6 l-3,3.200 Z" fill="#2e1402"/>
<path d="M10,21.500 C12,23.500 17,23.500 19,21.500" stroke="#5a2a06" stroke-width="1.400" fill="none"/>
</g>
<g transform="translate(774.5,746) scale(0.52)">
<path d="M0.5,3.2 Q14.5,-2 28.5,3.2 C28.6,10 28.4,17 26.8,21.5 C25,26.5 20,29.6 14.5,30.8 C9,29.6 4,26.5 2.2,21.5 C0.6,17 0.4,10 0.5,3.2 Z" fill="#f6b324" stroke="#5a2a06" stroke-width="2.200" stroke-linejoin="round"/>
<path d="M14.5,1 V6 M7,2 L9.500,7.500 M22,2 L19.500,7.500 M1.500,11 L6.500,12.500 M27.500,11 L22.500,12.500 M4,23 L8.500,20.500 M25,23 L20.500,20.500 M14.500,30 V24" stroke="#7a3a08" stroke-width="1.600" fill="none"/>
<circle cx="14.500" cy="15" r="8.400" fill="#f39a1e" stroke="#5a2a06" stroke-width="1.800"/>
<path d="M12.500,11.500 h4 l-0.300,6 h-3.400 Z" fill="#ffe23a"/>
<path d="M9.500,12.400 l3.200,1.800 M19.500,12.400 l-3.200,1.800" stroke="#2e1402" stroke-width="2" fill="none"/>
<path d="M11.500,17.600 h6 l-3,3.200 Z" fill="#2e1402"/>
<path d="M10,21.500 C12,23.500 17,23.500 19,21.500" stroke="#5a2a06" stroke-width="1.400" fill="none"/>
</g>
<g transform="translate(898,747)">
<path d="M9,0 C9,2.500 5.500,1.500 5.500,4.500" fill="none" stroke="#000" stroke-width="1"/>
<rect x="0.500" y="4.500" width="16" height="10" rx="2" fill="#fff" stroke="#000" stroke-width="1.200"/>
<path d="M2.500,7.500 h12 M2.500,9.500 h12" stroke="#000" stroke-width="1" stroke-dasharray="1 1"/>
<path d="M4,12 h9" stroke="#000" stroke-width="1.200"/>
</g>
<g transform="translate(943,744)">
<rect x="6" y="0.500" width="9.500" height="8.500" rx="1.500" fill="#4a9cf0" stroke="#2a62c0" stroke-width="0.800"/>
<rect x="7.500" y="2" width="6" height="4.500" fill="#8cc8ff"/>
<path d="M9,9.500 h4 l1,2 h-6 Z" fill="#9ab8e0"/>
<rect x="0.500" y="5" width="9.500" height="8.500" rx="1.500" fill="#5aa8f4" stroke="#2a62c0" stroke-width="0.800"/>
<rect x="2" y="6.500" width="6" height="4.500" fill="#a8d8ff"/>
<path d="M2.500,14 h5.500 l1.500,2.400 h-8.500 Z" fill="#9ab8e0" stroke="#6a88b8" stroke-width="0.500"/>
</g>
<g transform="translate(961,744)">
<rect x="6" y="0.500" width="9.500" height="8.500" rx="1.500" fill="#4a9cf0" stroke="#2a62c0" stroke-width="0.800"/>
<rect x="7.500" y="2" width="6" height="4.500" fill="#8cc8ff"/>
<path d="M9,9.500 h4 l1,2 h-6 Z" fill="#9ab8e0"/>
<rect x="0.500" y="5" width="9.500" height="8.500" rx="1.500" fill="#5aa8f4" stroke="#2a62c0" stroke-width="0.800"/>
<rect x="2" y="6.500" width="6" height="4.500" fill="#a8d8ff"/>
<path d="M2.500,14 h5.500 l1.500,2.400 h-8.500 Z" fill="#9ab8e0" stroke="#6a88b8" stroke-width="0.500"/>
</g>

</svg>

</body>
</html>
